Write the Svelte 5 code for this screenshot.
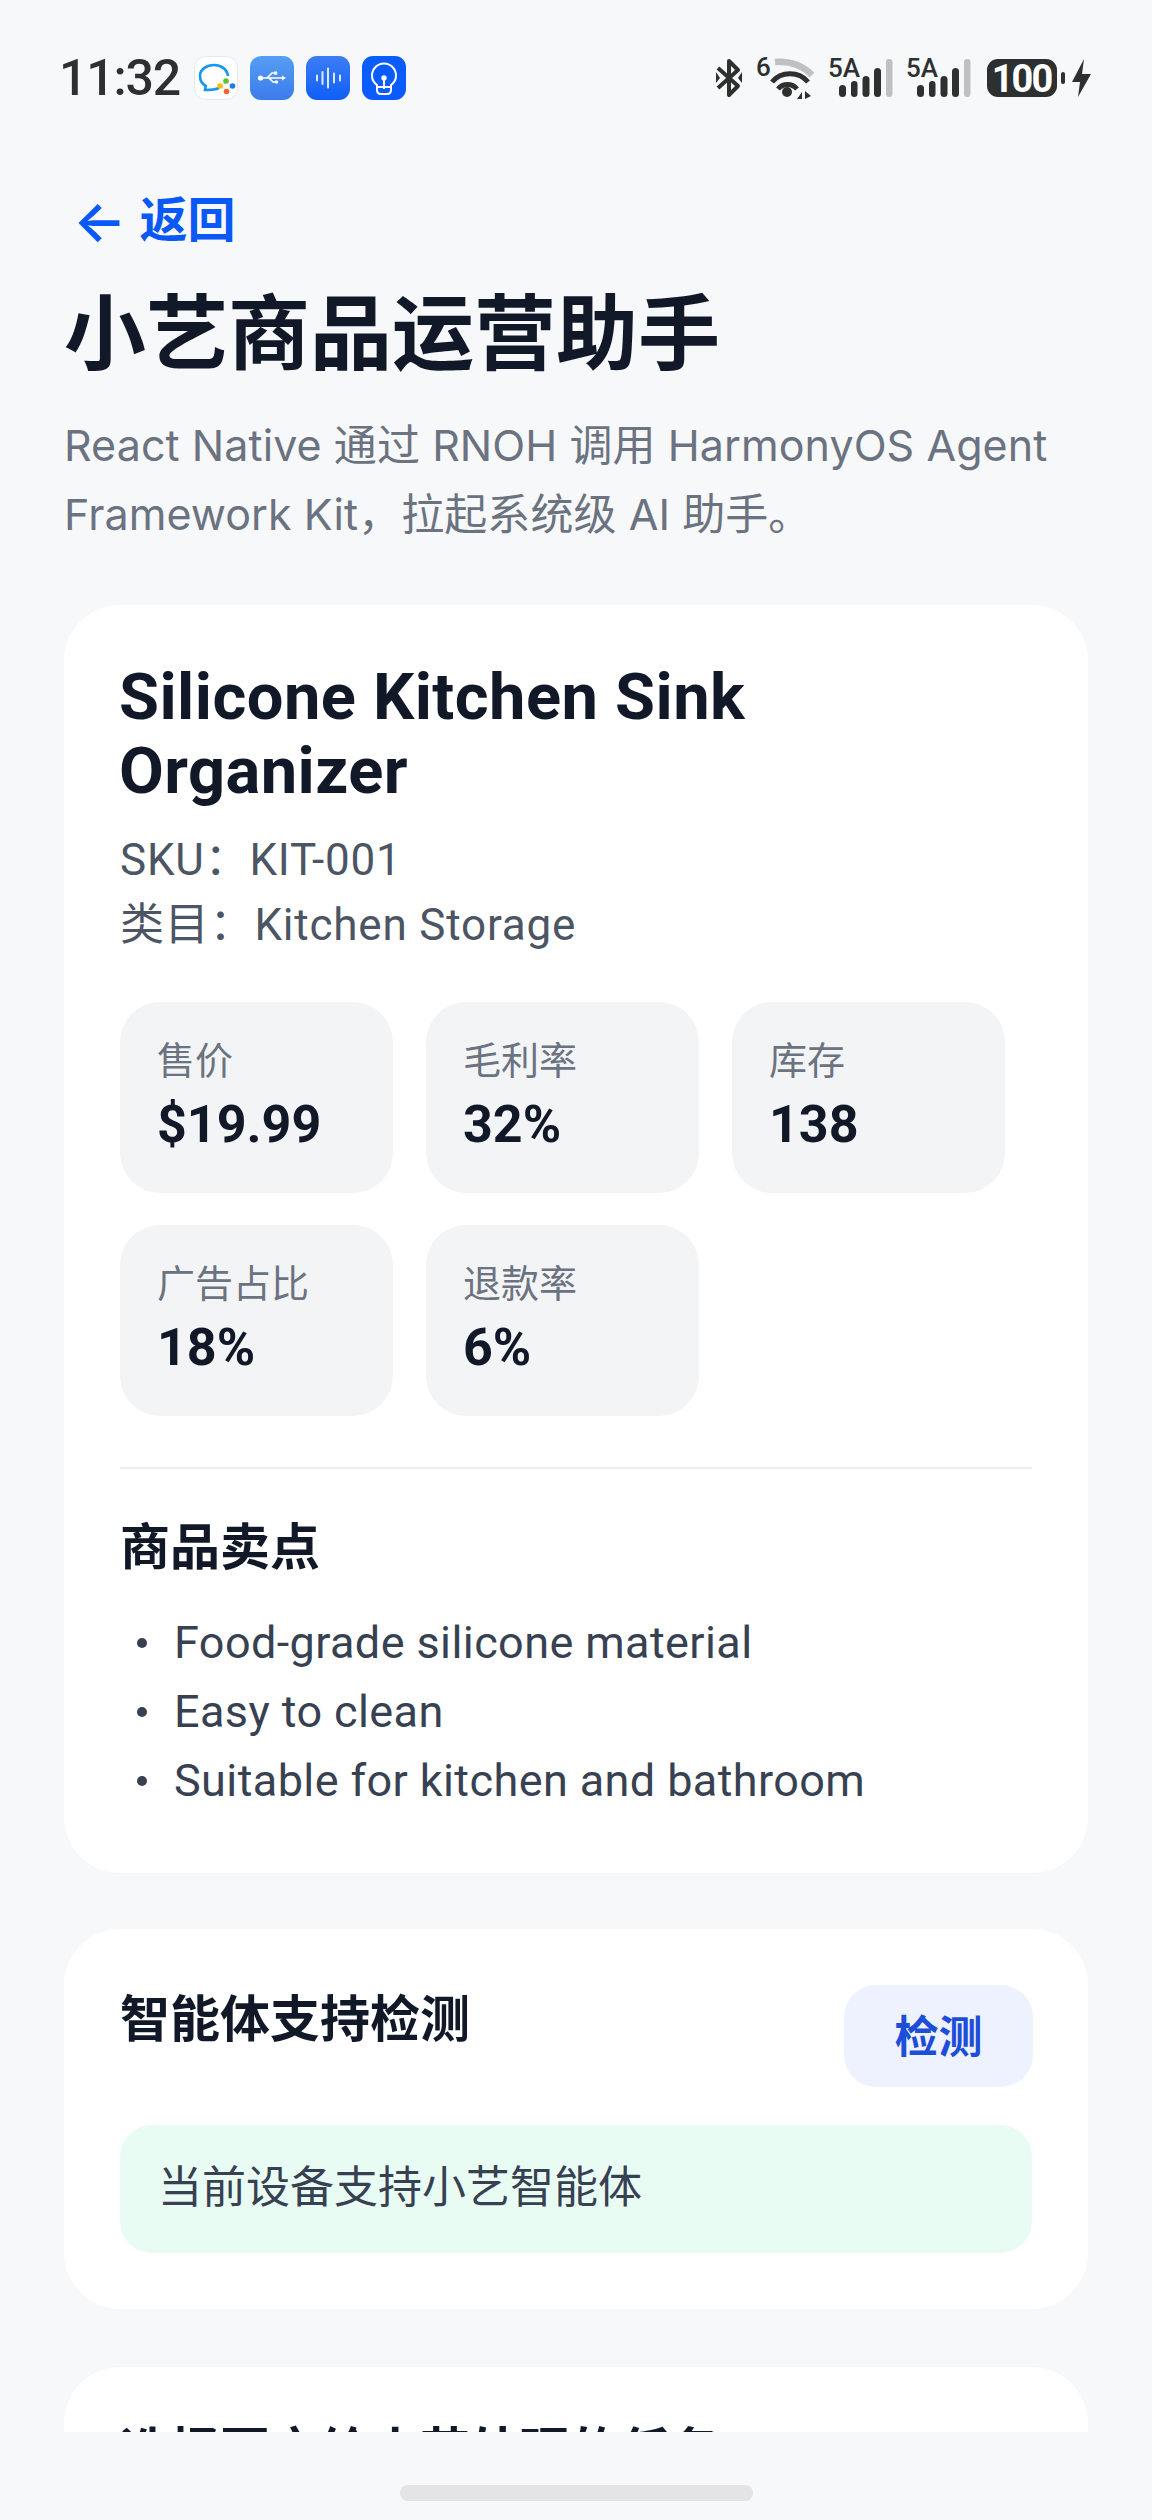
<script>
  const metrics = [
    { label: '售价', value: '$19.99' },
    { label: '毛利率', value: '32%' },
    { label: '库存', value: '138' },
    { label: '广告占比', value: '18%' },
    { label: '退款率', value: '6%' }
  ];
  const points = ['Food-grade silicone material', 'Easy to clean', 'Suitable for kitchen and bathroom'];
</script>

<div class="screen">
  <div class="status">
    <div class="left">
      <span class="time">11:32</span>
      <div class="apps">
        <svg class="app" viewBox="0 0 44 44" width="44" height="44">
          <rect x="0.5" y="0.500" width="43" height="43" rx="11" fill="#fff" stroke="#e6e8ea"/>
          <path d="M12 30c-4-2-6-6-6-10C6 13 13 9 20 9c7 0 13 4 14 11" fill="none" stroke="#1597f2" stroke-width="2.600"/>
          <path d="M12 29l-1 5c5 0 10 0 14-2" fill="none" stroke="#1597f2" stroke-width="2.600"/>
          <path d="M32 26l-5 4 5.500 5L38 30z" fill="none" stroke="#e8e8e8" stroke-width="1.500"/>
          <circle cx="32" cy="25" r="2.800" fill="#5fc12e"/><circle cx="26" cy="30" r="2.800" fill="#fbbc05"/><circle cx="38.500" cy="30" r="2.800" fill="#1a7bf0"/><circle cx="32.500" cy="35.500" r="2.800" fill="#f2622b"/>
        </svg>
        <svg class="app" viewBox="0 0 44 44" width="44" height="44">
          <defs><linearGradient id="g1" x1="0" y1="0" x2="0" y2="1"><stop offset="0" stop-color="#559ef3"/><stop offset="1" stop-color="#3b7bec"/></linearGradient></defs>
          <rect width="44" height="44" rx="11" fill="url(#g1)"/>
          <path d="M10 22h23M14 22h3l5-5h3M19 22l4 4h3" fill="none" stroke="#fff" stroke-width="1.700"/>
          <circle cx="10.500" cy="22" r="2.600" fill="#fff"/><path d="M36 22l-4-2.500v5z" fill="#fff"/><rect x="24" y="15.500" width="3.200" height="3.200" fill="#fff"/><circle cx="26.500" cy="26" r="1.700" fill="#fff"/>
        </svg>
        <svg class="app" viewBox="0 0 44 44" width="44" height="44">
          <defs><linearGradient id="g2" x1="0" y1="0" x2="0" y2="1"><stop offset="0" stop-color="#3d7df6"/><stop offset="1" stop-color="#0e5ff6"/></linearGradient></defs>
          <rect width="44" height="44" rx="11" fill="url(#g2)"/>
          <path d="M11 19.500v5M16.500 16v12M22 12.500v19M28 17.500v9M34 19.500v5" stroke="#fff" stroke-opacity=".85" stroke-width="2" stroke-linecap="round"/>
        </svg>
        <svg class="app" viewBox="0 0 44 44" width="44" height="44">
          <rect width="44" height="44" rx="11" fill="#0b5cff"/>
          <path d="M15 31v-2c-3-2-5-5-5-9.500a12 12 0 0 1 24 0c0 4.500-2 7.500-5 9.500v2M15 31v3c0 3 2 4 4 4h6c2 0 4-1 4-4v-3z" fill="none" stroke="#fff" stroke-width="2"/>
          <path d="M22 22v11" stroke="#fff" stroke-width="2"/><circle cx="22" cy="22" r="2.700" fill="#fff"/>
        </svg>
      </div>
    </div>
    <svg class="sysicons" viewBox="717 58 376 42" width="376" height="42">
      <path d="M719 69l20 18-9 9V62l9 9-20 18" fill="none" stroke="#2e3030" stroke-width="4" stroke-linejoin="round"/>
      <path d="M717 73v11l4-5zM743 73v11l-4-5z" fill="#2e3030"/>
      <text x="757" y="77" class="st6">6</text>
      <path d="M776 63c14-1 27 3 37 13" fill="none" stroke="#bfc0c0" stroke-width="6.500"/>
      <path d="M773 83c9-11 27-11 36 0M779 90c5-6 14-6 19 0" fill="none" stroke="#2e3030" stroke-width="5"/>
      <circle cx="788" cy="93" r="5" fill="#2e3030"/>
      <path d="M798 100l5-7v7zM806 92l6 5-6 3z" fill="#2e3030"/>
      <text x="829" y="78" class="st5">5A</text>
      <g class="sig"><rect x="840" y="86" width="7" height="12" rx="3.500"/><rect x="852" y="82" width="6.500" height="16" rx="3.200"/><rect x="863.500" y="77" width="7" height="21" rx="3.500"/><rect x="875" y="69" width="7" height="29" rx="3.500"/></g>
      <rect x="887" y="60" width="6.500" height="38" rx="3.200" fill="#bfc0c0"/>
      <text x="907" y="78" class="st5">5A</text>
      <g class="sig"><rect x="918" y="86" width="7" height="12" rx="3.500"/><rect x="930" y="82" width="6.500" height="16" rx="3.200"/><rect x="941.500" y="77" width="7" height="21" rx="3.500"/><rect x="953" y="69" width="7" height="29" rx="3.500"/></g>
      <rect x="965" y="60" width="6.500" height="38" rx="3.200" fill="#bfc0c0"/>
      <rect x="988" y="60" width="70" height="38" rx="11" fill="#2e3030"/>
      <text x="1022.500" y="93" class="batt">100</text>
      <rect x="1062" y="73" width="4" height="12" rx="2" fill="#2e3030"/>
      <path d="M1085 60l-12 23h8l-2 15 13-23h-9z" fill="#2e3030"/>
    </svg>
  </div>

  <div class="scroll">
    <div class="back"><span class="arrow">←</span><span>返回</span></div>
    <h1>小艺商品运营助手</h1>
    <p class="sub">React Native 通过 RNOH 调用 HarmonyOS Agent Framework Kit，拉起系统级 AI 助手。</p>

    <section class="card first">
      <h2>Silicone Kitchen Sink Organizer</h2>
      <div class="meta sku">SKU：KIT-001</div>
      <div class="meta">类目：Kitchen Storage</div>
      <div class="grid">
        {#each metrics as m}
          <div class="metric">
            <div class="label">{m.label}</div>
            <div class="value">{m.value}</div>
          </div>
        {/each}
      </div>
      <div class="divider"></div>
      <h3 class="points">商品卖点</h3>
      <ul>
        {#each points as p}
          <li><span class="dot"></span><span>{p}</span></li>
        {/each}
      </ul>
    </section>

    <section class="card second">
      <div class="row">
        <h3 class="detect">智能体支持检测</h3>
        <button>检测</button>
      </div>
      <div class="ok">当前设备支持小艺智能体</div>
    </section>

    <section class="card third">
      <h3>选择要交给小艺处理的任务</h3>
    </section>
  </div>

  <div class="homebar"><div class="pill"></div></div>
</div>

<style>
  :global(body) { margin: 0; background: #f7f8fa; }
  .screen {
    width: 1152px; height: 2520px; background: #f7f8fa; overflow: hidden;
    font-family: Roboto, "Noto Sans CJK SC", sans-serif;
  }
  .status { height: 44px; padding: 56px 60px 0 59px; display: flex; justify-content: space-between; align-items: center; }
  .left { display: flex; align-items: center; }
  .time { font-size: 50px; font-weight: 500; color: #2e3030; width: 135px; letter-spacing: -1.2px; }
  .apps { display: flex; gap: 12px; }
  .app { display: block; }
  .sysicons { display: block; overflow: visible; }
  .st6, .st5 { font-weight: 500; font-size: 26px; fill: #2e3030; }
  .sig rect { fill: #2e3030; }
  .batt { font-weight: 700; font-size: 38px; letter-spacing: -2px; fill: #fff; text-anchor: middle; }

  .scroll { height: 2332px; padding: 0 64px; overflow: hidden; box-sizing: border-box; }
  .back { margin: 91px 0 0 9px; height: 60px; display: flex; align-items: center; gap: 13px; font-size: 48px; line-height: 60px; font-weight: 600; color: #0a59f7; }
  .arrow { font-family: Inter, sans-serif; font-size: 56px; }
  h1 { margin: 34px 0 0; font-size: 82px; line-height: 100px; font-weight: 700; color: #111827; }
  .sub { margin: 26px 0 0; font-family: Inter, "Noto Sans CJK SC", sans-serif; font-size: 43px; line-height: 69px; letter-spacing: 0.07px; color: #6b7280; }
  .card { background: #fff; border-radius: 56px; padding: 55px 56px; box-sizing: border-box; }
  .first { margin-top: 56px; padding-bottom: 58px; }
  .second { margin-top: 56px; padding-top: 56px; padding-bottom: 56px; }
  .third { margin-top: 58px; height: 300px; padding-top: 51px; }
  h2 { margin: 0 0 0 -1px; font-size: 65px; line-height: 74px; font-weight: 700; letter-spacing: 0.45px; color: #111827; width: 760px; }
  .meta { font-size: 44px; line-height: 65px; letter-spacing: 0.8px; color: #4b5563; }
  .sku { margin-top: 20px; }
  .grid { margin-top: 44px; display: flex; flex-wrap: wrap; gap: 32px 33px; }
  .metric { width: 273px; height: 191px; background: #f3f4f6; border-radius: 40px; padding: 35px 37px 0; box-sizing: border-box; }
  .label { font-size: 38px; line-height: 48px; color: #6b7280; }
  .value { margin-top: 6px; font-size: 52px; line-height: 68px; font-weight: 700; color: #111827; }
  .divider { height: 2px; background: #eceef0; margin-top: 51px; }
  h3 { margin: 0; font-size: 50px; line-height: 68px; font-weight: 700; color: #111827; }
  .points { margin-top: 45px; }
  ul { list-style: none; margin: 26px 0 0; padding: 0; }
  li { font-size: 45px; line-height: 69px; letter-spacing: 0.4px; color: #374151; display: flex; align-items: center; }
  .dot { width: 10px; height: 10px; border-radius: 50%; background: #374151; margin: 0 27px 0 17px; }
  .row { display: flex; justify-content: space-between; align-items: flex-start; }
  .detect { margin-top: 1px; }
  button { width: 189px; height: 102px; margin-right: -1px; padding: 0 0 4px; border: 0; border-radius: 32px; background: #eef2ff; color: #1d4ed8; font: 600 44px Roboto, "Noto Sans CJK SC", sans-serif; }
  .ok { margin-top: 38px; height: 128px; line-height: 126px; padding: 0 38px; background: #e9fcf4; border-radius: 32px; font-size: 44px; color: #374151; }
  .homebar { height: 88px; display: flex; justify-content: center; padding-top: 53px; box-sizing: border-box; }
  .pill { width: 353px; height: 16px; border-radius: 8px; background: #e4e4e6; }
</style>
